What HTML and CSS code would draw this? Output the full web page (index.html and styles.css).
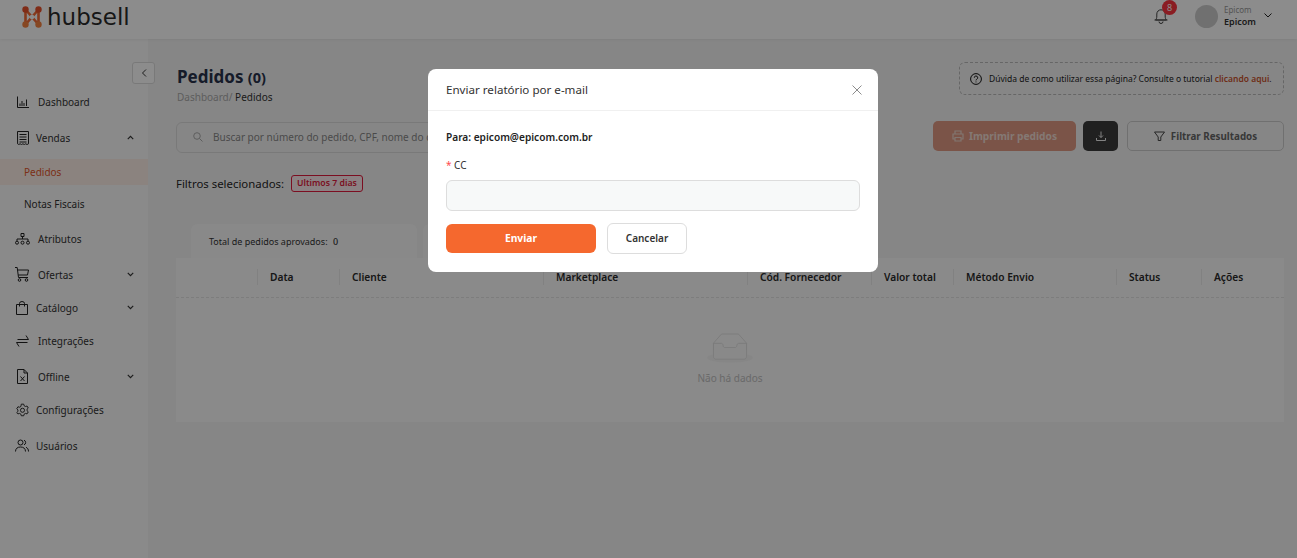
FILE: index.html
```html
<!DOCTYPE html>
<html lang="pt-BR">
<head>
<meta charset="utf-8">
<title>Pedidos - hubsell</title>
<link rel="stylesheet" href="styles.css">
</head>
<body>
<header class="topbar">
  <div class="logo">
    <svg class="logo-mark" width="20" height="22" viewBox="0 0 20 22" fill="none">
      <path d="M3.500 3.500 L3.500 18.500 M16.500 3.500 L16.500 18.500 M3.500 3.500 L16.500 18.500 M16.500 3.500 L3.500 18.500" stroke="#f26a35" stroke-width="2.600"/>
      <circle cx="3.500" cy="3.500" r="3.200" fill="#e8502a"/><circle cx="16.500" cy="3.500" r="3.200" fill="#e8502a"/>
      <circle cx="3.500" cy="18.500" r="3.200" fill="#f5813f"/><circle cx="16.500" cy="18.500" r="3.200" fill="#f5813f"/>
      <circle cx="10" cy="11" r="2.300" fill="#fff"/>
    </svg>
    <span class="logo-text">hubsell</span>
  </div>
  <div class="topbar-right">
    <div class="bell">
      <svg width="14" height="16" viewBox="0 0 14 16" fill="none" stroke="#444" stroke-width="1"><path d="M1.500 12c1-1 1.300-2 1.300-4V6a4.200 4.200 0 0 1 8.400 0v2c0 2 .3 3 1.300 4zM.5 12h13M5 13.500a2 2 0 0 0 4 0"/></svg>
      <span class="badge">8</span>
    </div>
    <div class="avatar"></div>
    <div class="user"><span class="user-org">Epicom</span><span class="user-name">Epicom</span></div>
    <svg class="user-caret" width="8" height="5" viewBox="0 0 8 5" fill="none" stroke="#222" stroke-width="1"><path d="M.5.5l3.500 3.500L7.500.5"/></svg>
  </div>
</header>
<div class="shell">
  <aside class="sidebar">
    <div class="collapse-row"><button class="collapse"><svg width="6" height="8" viewBox="0 0 6 8" fill="none" stroke="#333" stroke-width="1"><path d="M5 .5 1.500 4 5 7.500"/></svg></button></div>
    <nav class="menu">
      <a class="item h-dash"><svg class="ic ml2" width="12" height="12" viewBox="0 0 12 12" fill="none" stroke="#222"><path d="M.5 .5v11H12M3 10V7.500M5 10V5M7 10V7M9.500 10V3.500"/></svg><span class="lbl">Dashboard</span></a>
      <a class="item h-vendas"><svg class="ic ml2" width="12" height="14" viewBox="0 0 12 14" fill="none" stroke="#222"><path d="M.5.5h11v12.300l-1.400.7-1.400-.7-1.400.7-1.400-.7-1.400.7-1.400-.7-1.400.7-1.100-.7zM2.500 3.500h7M2.500 6h7M2.500 8.500h7M2.500 11h7"/></svg><span class="lbl lbl-n">Vendas</span><svg class="caret" viewBox="0 0 9 6" fill="none" stroke="#333" stroke-width="1.500"><path d="M1 5l3.500-3.500L8 5"/></svg></a>
      <a class="sub active">Pedidos</a>
      <a class="sub sub-next">Notas Fiscais</a>
      <a class="item h-atr"><svg class="ic" width="15" height="12" viewBox="0 0 15 12" fill="none" stroke="#222"><path d="M6 .5h3v3H6zM7.500 3.500V6M2 8V6h11v2"/><circle cx="2" cy="9.700" r="1.500"/><circle cx="7.500" cy="9.700" r="1.500"/><circle cx="13" cy="9.700" r="1.500"/></svg><span class="lbl">Atributos</span></a>
      <a class="item h-of"><svg class="ic" width="14" height="15" viewBox="0 0 14 15" fill="none" stroke="#222"><path d="M0 .5h2.200l1.300 10h9.500M2.500 3H13.500l-1 5H3.200"/><circle cx="4.500" cy="13" r="1.300"/><circle cx="11.500" cy="13" r="1.300"/></svg><span class="lbl">Ofertas</span><svg class="caret" viewBox="0 0 9 6" fill="none" stroke="#333" stroke-width="1.500"><path d="M1 1l3.500 3.500L8 1"/></svg></a>
      <a class="item h-cat"><svg class="ic ml1" width="12" height="14" viewBox="0 0 12 14" fill="none" stroke="#222"><path d="M.5 3.500h11v10H.5zM3.500 5.500V2.500a2.500 2 0 0 1 5 0v3" /></svg><span class="lbl lbl-n">Catálogo</span><svg class="caret" viewBox="0 0 9 6" fill="none" stroke="#333" stroke-width="1.500"><path d="M1 1l3.500 3.500L8 1"/></svg></a>
      <a class="item h-int"><svg class="ic ml1" width="13" height="12" viewBox="0 0 13 12" fill="none" stroke="#222"><path d="M1.500 4.500h11L10 .5M11.500 7.500H.5l2.500 4"/></svg><span class="lbl">Integrações</span></a>
      <a class="item h-off"><svg class="ic ml2" width="11" height="15" viewBox="0 0 11 15" fill="none" stroke="#222"><path d="M.5.500h6.500l3.500 3.500v10.500H.5zM7 .5V4h3.500M3.500 7.500l4 4.500M7.500 7.500l-4 4.500"/></svg><span class="lbl lbl-o">Offline</span><svg class="caret" viewBox="0 0 9 6" fill="none" stroke="#333" stroke-width="1.500"><path d="M1 1l3.500 3.500L8 1"/></svg></a>
      <a class="item h-cfg"><svg class="ic ml1" width="13" height="14" viewBox="0 0 14 14" fill="none" stroke="#222"><path d="M5.700.7h2.600l.4 1.700 1.500.8 1.700-.5 1.300 2.200-1.300 1.200v1.700l1.300 1.200-1.300 2.200-1.700-.5-1.500.8-.4 1.700H5.700l-.4-1.700-1.500-.8-1.700.5L.8 9.800 2.100 8.600V6.900L.8 5.700l1.300-2.200 1.700.5 1.500-.8z"/><circle cx="7" cy="7.300" r="2.200"/></svg><span class="lbl lbl-n">Configurações</span></a>
      <a class="item h-us"><svg class="ic" width="14" height="13" viewBox="0 0 14 13" fill="none" stroke="#222"><circle cx="5.500" cy="3.500" r="2.500"/><path d="M.5 12.500c0-3 2-4.500 5-4.500s5 1.500 5 4.500M9 1.200a2.500 2.500 0 0 1 0 4.700M11 8.300c1.500.6 2.500 2 2.500 4.200"/></svg><span class="lbl lbl-n">Usuários</span></a>
    </nav>
  </aside>
  <main class="main">
    <div class="title-row">
      <div class="title-block">
        <h1 class="page-title">Pedidos <small>(0)</small></h1>
        <div class="crumbs"><span class="crumb-muted">Dashboard/</span> Pedidos</div>
      </div>
      <div class="help">
        <svg class="help-ic" width="12" height="12" viewBox="0 0 12 12" fill="none" stroke="#111"><circle cx="6" cy="6" r="5.400"/><path d="M4.300 4.700a1.700 1.700 0 1 1 2.500 1.500c-.5.300-.8.600-.8 1.200M6 8.500v.9"/></svg>
        <span>Dúvida de como utilizar essa página? Consulte o tutorial <b>clicando aqui</b>.</span>
      </div>
    </div>
    <div class="tools">
      <div class="search">
        <svg class="search-ic" width="10" height="10" viewBox="0 0 10 10" fill="none" stroke="#aaa"><circle cx="4" cy="4" r="3.300"/><path d="M6.500 6.500 9.500 9.500"/></svg>
        <span class="search-text">Buscar por número do pedido, CPF, nome do c</span>
      </div>
      <button class="btn-print"><svg width="12" height="12" viewBox="0 0 12 12" fill="none" stroke="#ecd6cc" stroke-width="1.200"><path d="M3 4V1h6v3M3 9H1V4h10v5H9M3 7.500h6V11H3z"/></svg>Imprimir pedidos</button>
      <button class="btn-dl"><svg width="10" height="10" viewBox="0 0 10 10" fill="none" stroke="#eee"><path d="M5 .5v6M3 4.500l2 2 2-2M.5 7v2.500h9V7"/></svg></button>
      <button class="btn-filter"><svg width="11" height="11" viewBox="0 0 11 11" fill="none" stroke="#444"><path d="M.5 1h10L6.800 6v3.500H4.200V6z"/></svg>Filtrar Resultados</button>
    </div>
    <div class="filters">Filtros selecionados: <span class="tag">Ultimos 7 dias</span></div>
    <div class="tabs"><div class="tab">Total de pedidos aprovados: <b>0</b></div><div class="tab"></div></div>
    <section class="table">
      <div class="thead">
        <div class="th"></div><div class="th">Data</div><div class="th">Cliente</div><div class="th">Marketplace</div><div class="th">Cód. Fornecedor</div><div class="th">Valor total</div><div class="th">Método Envio</div><div class="th">Status</div><div class="th">Ações</div>
      </div>
      <div class="empty">
        <svg width="46" height="30" viewBox="0 0 64 41"><g transform="translate(0 1)" fill="none" fill-rule="evenodd"><ellipse fill="#f5f5f5" cx="32" cy="33" rx="32" ry="7"/><g fill-rule="nonzero" stroke="#d9d9d9"><path d="M55 12.760L44.854 1.258C44.367.474 43.656 0 42.907 0H21.093c-.749 0-1.460.474-1.947 1.257L9 12.761V22h46v-9.240z"/><path d="M41.613 15.931c0-1.605.994-2.930 2.227-2.931H55v18.137C55 33.260 53.680 35 52.050 35h-40.100C10.320 35 9 33.259 9 31.137V13h11.160c1.233 0 2.227 1.323 2.227 2.928v.022c0 1.605 1.005 2.901 2.237 2.901h14.752c1.232 0 2.237-1.308 2.237-2.913v-.007z" fill="#fafafa"/></g></g></svg>
        <span>Não há dados</span>
      </div>
    </section>
  </main>
</div>
<div class="overlay"></div>
<div class="modal">
  <div class="modal-head">
    <span>Enviar relatório por e-mail</span>
    <svg width="10" height="10" viewBox="0 0 10 10" fill="none" stroke="#8c8c8c"><path d="M.5.5l9 9M9.500.5l-9 9"/></svg>
  </div>
  <div class="modal-body">
    <p class="to">Para: epicom@epicom.com.br</p>
    <label class="cc"><i>*</i> CC</label>
    <div class="input"></div>
    <div class="actions">
      <button class="send">Enviar</button>
      <button class="cancel">Cancelar</button>
    </div>
  </div>
</div>
</body>
</html>
```
FILE: styles.css
```css
* { box-sizing: border-box; }
html, body { margin: 0; height: 100%; }
body { width: 1297px; height: 558px; overflow: hidden; background: #f5f5f5; font-family: "Noto Sans", "Open Sans", sans-serif; font-size: 10px; color: #262626; }
button { font-family: inherit; cursor: pointer; }
.topbar { height: 39px; background: #fff; display: flex; justify-content: space-between; align-items: center; padding: 0 25px 0 22px; box-shadow: 0 1px 3px rgba(0,0,0,.06); position: relative; }
.logo { display: flex; align-items: center; gap: 5px; margin-top: -6px; }
.logo-text { font-family: "DejaVu Sans", sans-serif; font-size: 23px; line-height: 26px; color: #2b2b2b; }
.topbar-right { display: flex; align-items: center; margin-top: -7px; }
.bell { position: relative; width: 14px; height: 16px; margin-right: 27px; }
.bell svg { display: block; }
.badge { position: absolute; left: 8px; top: -8px; width: 15px; height: 15px; border-radius: 50%; background: #fb3640; color: #fff; font-size: 9px; line-height: 15px; text-align: center; }
.avatar { width: 23px; height: 23px; border-radius: 50%; background: #ccc; margin-right: 6px; }
.user { display: flex; flex-direction: column; width: 40px; }
.user-org { font-size: 8px; line-height: 10px; color: #999; }
.user-name { font-size: 9px; line-height: 13px; font-weight: 600; color: #333; }
.user-caret { margin-bottom: 2px; }
.shell { display: flex; height: 519px; }
.sidebar { width: 148px; background: #fbfbfb; flex: none; }
.collapse-row { display: flex; justify-content: flex-end; height: 45px; padding-top: 23px; }
.collapse { width: 23px; height: 22px; margin-right: -7px; background: #fff; border: 1px solid #ddd; border-radius: 3px; padding: 0; display: flex; align-items: center; justify-content: center; position: relative; }
.menu { display: flex; flex-direction: column; }
.item { display: flex; align-items: center; padding-left: 15px; color: #333; font-size: 10px; position: relative; height: 33px; }
.ic { flex: none; }
.ml1 { margin-left: 1px; }
.ml2 { margin-left: 2px; }
.lbl { position: absolute; left: 38px; }
.lbl-n { left: 36px; }
.lbl-o { left: 38px; }
.caret { position: absolute; left: 127px; width: 7px; height: 5px; }
.h-dash { height: 34px; margin-top: 1px; }
.h-vendas { margin-top: 1px; height: 35px; }
.sub { display: flex; align-items: center; height: 26px; padding-left: 24px; font-size: 10px; color: #333; }
.sub.active { margin-top: 4px; background: #fdeee8; color: #e2572a; }
.sub-next { margin-top: 6px; }
.h-atr { margin-top: 5px; margin-bottom: 2px; height: 34px; }
.h-off { margin-top: 3px; }
.h-us { margin-top: 3px; }
.main { flex: 1; padding: 0 13px 0 28px; min-width: 0; }
.title-row { display: flex; justify-content: space-between; padding-top: 23px; height: 82px; }
.title-block { padding: 4px 0 0 1px; }
.page-title { margin: 0; font-size: 17px; line-height: 22px; font-weight: 700; color: #28324b; }
.page-title small { font-size: 14.500px; }
.crumbs { font-size: 10px; line-height: 14px; margin-top: 2px; color: #333; }
.crumb-muted { color: #aaa; }
.help { display: flex; align-items: center; gap: 7px; height: 33px; width: 325px; padding-left: 10px; border: 1px dashed #bbb; border-radius: 6px; font-size: 8.500px; color: #222; white-space: nowrap; }
.help-ic { flex: none; }
.help b { color: #c9532c; font-weight: 600; }
.tools { display: flex; align-items: flex-start; height: 32px; }
.search { width: 500px; height: 31px; margin-top: 1px; padding: 0 0 2px 16px; border: 1px solid #ddd; border-radius: 6px; display: flex; align-items: center; gap: 10px; color: #888; font-size: 10px; white-space: nowrap; }
.search-ic { flex: none; }
.btn-print { margin-left: auto; width: 143px; height: 30px; border: 0; border-radius: 5px; background: #e09a84; color: #f0dcd4; font-weight: 700; font-size: 10.200px; display: flex; align-items: center; justify-content: center; gap: 5px; }
.btn-dl { width: 35px; height: 30px; margin-left: 7px; border: 0; border-radius: 5px; background: #3b3b3b; padding: 0; }
.btn-filter { width: 157px; height: 30px; margin-left: 9px; background: #f5f5f5; border: 1px solid #ccc; border-radius: 5px; color: #666; font-weight: 700; font-size: 9.800px; display: flex; align-items: center; justify-content: center; gap: 6px; }
.filters { display: flex; align-items: center; gap: 7px; margin-top: 19px; height: 22px; font-size: 11.400px; color: #262626; }
.tag { height: 17px; padding: 0 5px; border: 1px solid #e01b3c; border-radius: 3px; color: #e01b3c; background: #fdecef; font-size: 8.700px; font-weight: 600; line-height: 15px; }
.tabs { display: flex; gap: 6px; margin-top: 30px; padding-left: 15px; height: 34px; }
.tab { width: 226px; background: #fafafa; border-radius: 7px 7px 0 0; padding: 11px 0 0 18px; font-size: 9px; color: #333; white-space: nowrap; }
.tab b { margin-left: 3px; font-weight: 500; }
.table { background: #fbfbfb; }
.thead { display: grid; grid-template-columns: 81px 82px 204px 204px 124px 82px 163px 85px 83px; height: 40px; padding-bottom: 2px; border-bottom: 1px dashed #e4e4e4; align-items: center; }
.th { height: 16px; line-height: 16px; padding-left: 12px; border-left: 1px solid #ececec; font-size: 10.200px; font-weight: 600; color: #2a2a2a; white-space: nowrap; }
.th:first-child { border-left: 0; }
.empty { height: 124px; display: flex; flex-direction: column; align-items: center; padding-top: 35px; gap: 8px; color: #bfbfbf; font-size: 10px; line-height: 14px; }
.overlay { position: fixed; inset: 0; background: rgba(0,0,0,.45); }
.modal { position: absolute; left: 428px; top: 69px; width: 450px; height: 203px; background: #fff; border-radius: 8px; }
.modal-head { height: 42px; display: flex; align-items: center; justify-content: space-between; padding: 0 16px 0 18px; border-bottom: 1px solid #f0f0f0; font-size: 11.600px; color: #333; }
.modal-body { padding: 19px 18px 0; }
.to { margin: 0; font-size: 10.150px; line-height: 14px; font-weight: 600; color: #222; }
.cc { display: block; margin-top: 14px; font-size: 10px; line-height: 14px; color: #333; }
.cc i { color: #ff4d4f; font-style: normal; }
.input { height: 31px; margin-top: 8px; background: #f7f9f9; border: 1px solid #ddd; border-radius: 6px; }
.actions { display: flex; gap: 11px; margin-top: 12px; align-items: center; }
.send { width: 150px; height: 29px; padding: 0 0 2px; border: 0; border-radius: 6px; background: #f5682e; color: #fff; font-size: 10.300px; font-weight: 700; }
.cancel { width: 80px; height: 31px; padding: 0 0 2px; background: #fff; border: 1px solid #ddd; border-radius: 6px; color: #333; font-size: 10px; font-weight: 600; }
```
